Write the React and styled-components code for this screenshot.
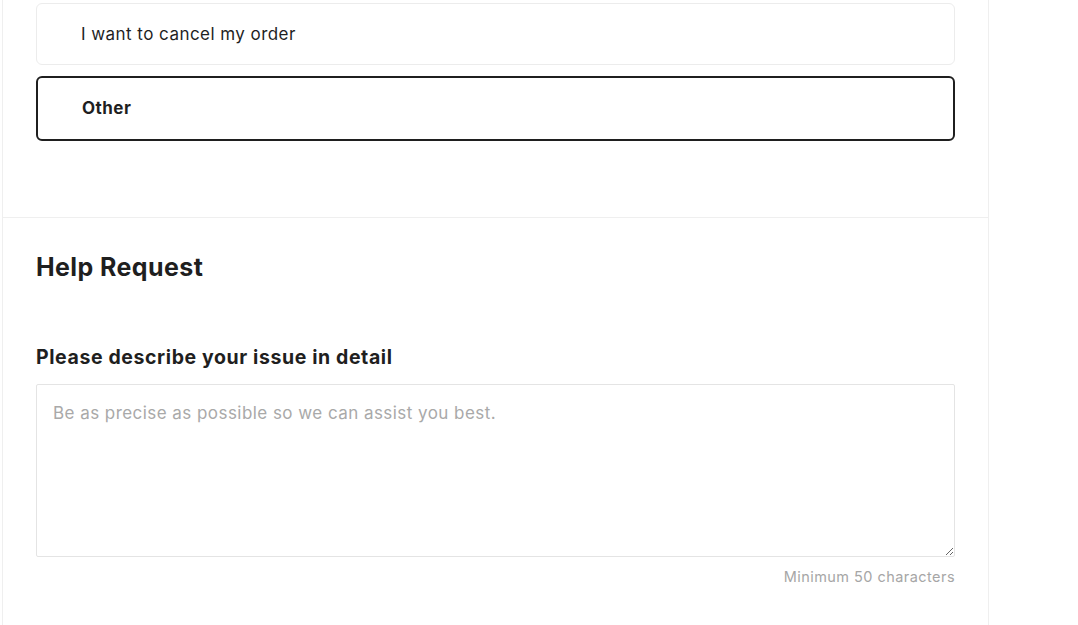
import React from "react";
import styled, { createGlobalStyle } from "styled-components";

const Global = createGlobalStyle`
  html, body {
    margin: 0;
    padding: 0;
    background: #ffffff;
    font-family: "Inter", "Liberation Sans", sans-serif;
    color: #1f1f1f;
    overflow: hidden;
  }
  * { box-sizing: border-box; }
`;

const Page = styled.div`
  width: 1078px;
  height: 625px;
  overflow: hidden;
  padding-left: 2px;
`;

const Panel = styled.div`
  width: 987px;
  min-height: 625px;
  border-left: 1px solid #efefef;
  border-right: 1px solid #efefef;
`;

const Section = styled.section`
  padding: ${(p) => p.$pad};
  border-bottom: ${(p) => (p.$divider ? "1px solid #efefef" : "none")};
`;

const Options = styled.div`
  display: flex;
  flex-direction: column;
  gap: 11px;
`;

const Option = styled.div`
  width: 919px;
  height: ${(p) => (p.$selected ? "65px" : "62px")};
  display: flex;
  align-items: center;
  padding-left: 44px;
  padding-bottom: ${(p) => (p.$selected ? "2px" : "0")};
  border: ${(p) => (p.$selected ? "2px solid #1f1f1f" : "1px solid #ececec")};
  border-radius: 6px;
  font-size: 17px;
  font-weight: ${(p) => (p.$selected ? 700 : 400)};
  color: #1f1f1f;
  letter-spacing: 0.45px;
`;

const Heading = styled.h2`
  margin: 0;
  font-size: 25px;
  font-weight: 700;
  line-height: 30px;
  letter-spacing: 0.4px;
  color: #1f1f1f;
`;

const Label = styled.label`
  display: block;
  margin-top: 63px;
  font-size: 19.5px;
  font-weight: 700;
  line-height: 24px;
  letter-spacing: 0.6px;
  color: #1f1f1f;
`;

const Field = styled.textarea`
  display: block;
  margin-top: 15px;
  width: 919px;
  height: 173px;
  border: 1px solid #e4e4e4;
  border-radius: 2px;
  padding: 18px 16px 16px;
  font-family: "Inter", "Liberation Sans", sans-serif;
  font-size: 17px;
  letter-spacing: 0.45px;
  color: #1f1f1f;
  outline: none;
  &::placeholder {
    color: #a9a9a9;
  }
`;

const Hint = styled.div`
  width: 919px;
  margin-top: 11px;
  text-align: right;
  font-size: 14.5px;
  letter-spacing: 0.45px;
  color: #a6a6a6;
`;

export default function App() {
  return (
    <Page>
      <Global />
      <Panel>
        <Section $pad="3px 33px 76px" $divider>
          <Options>
            <Option>I want to cancel my order</Option>
            <Option $selected>Other</Option>
          </Options>
        </Section>
        <Section $pad="34px 33px 40px">
          <Heading>Help Request</Heading>
          <Label htmlFor="issue">Please describe your issue in detail</Label>
          <Field
            id="issue"
            placeholder="Be as precise as possible so we can assist you best."
          />
          <Hint>Minimum 50 characters</Hint>
        </Section>
      </Panel>
    </Page>
  );
}
